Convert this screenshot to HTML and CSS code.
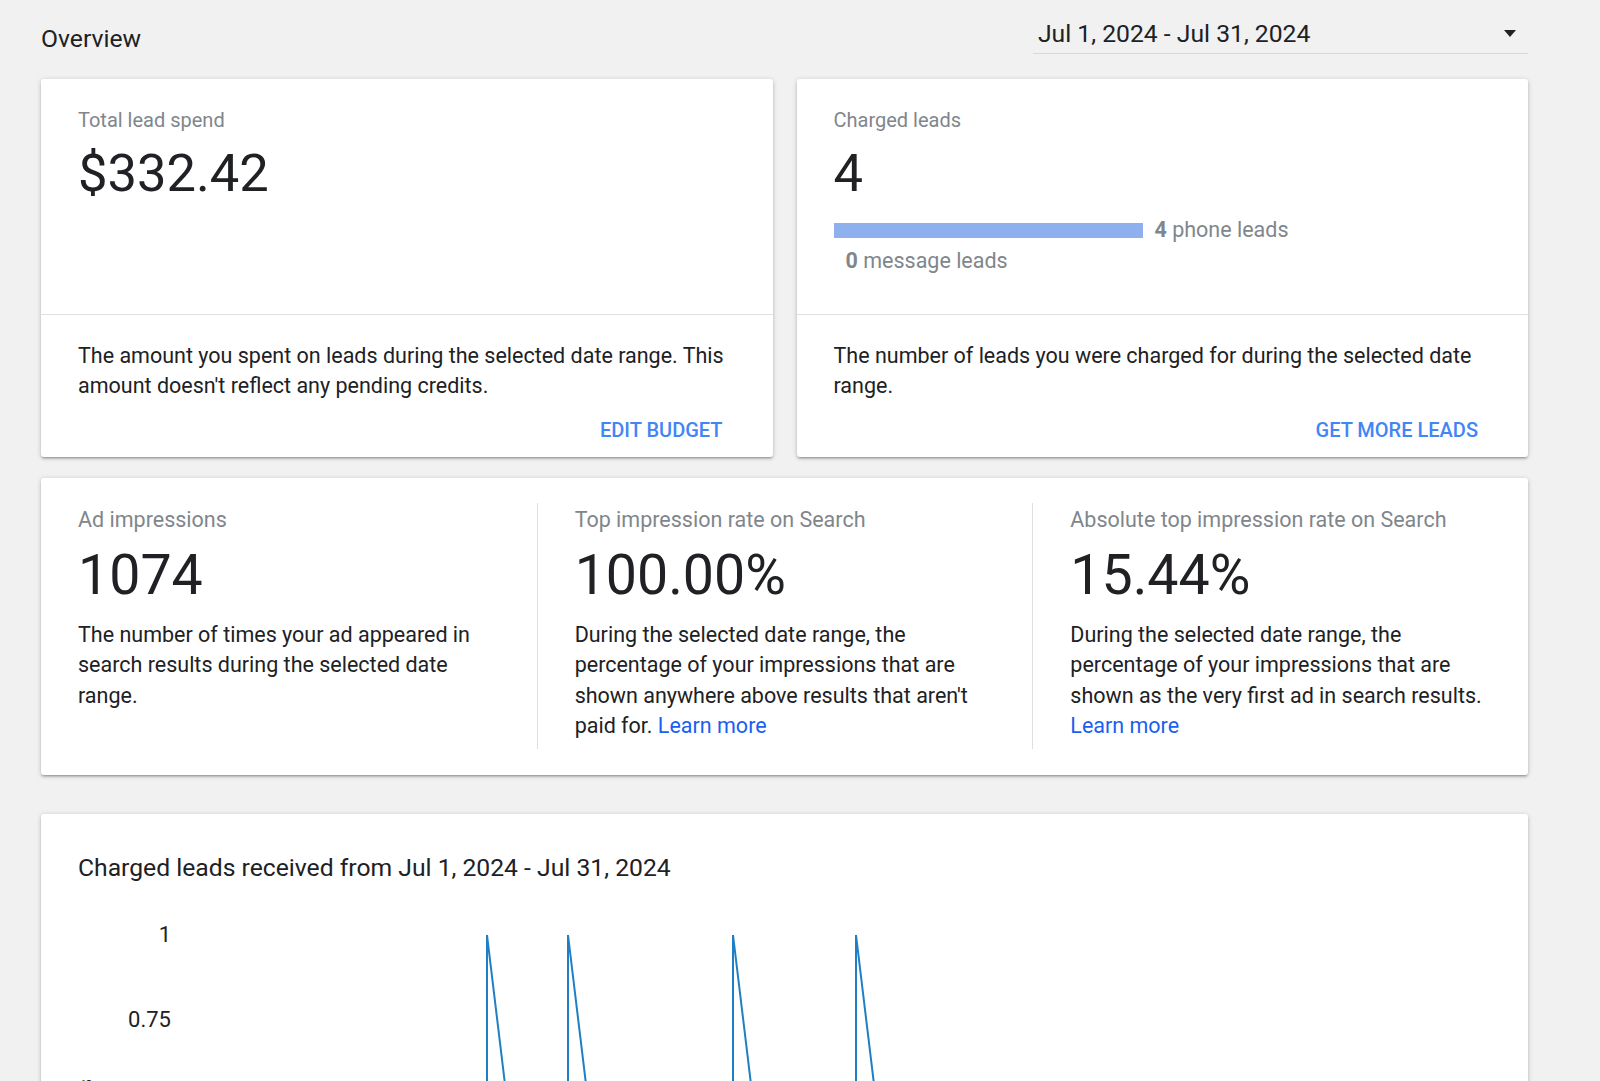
FILE: index.html
```html
<!DOCTYPE html>
<html lang="en">
<head>
<meta charset="utf-8">
<title>Overview</title>
<link rel="stylesheet" href="styles.css">
</head>
<body>
<div class="page">
  <header class="header">
    <h1 class="page-title">Overview</h1>
    <div class="date-select">
      <span class="date-text">Jul 1, 2024 - Jul 31, 2024</span>
      <svg class="caret" width="12" height="7" viewBox="0 0 12 7"><path d="M0 0 L12 0 L6 7 Z" fill="#202124"/></svg>
    </div>
  </header>

  <section class="summary">
    <div class="card">
      <div class="card-top">
        <div class="label">Total lead spend</div>
        <div class="value">$332.42</div>
      </div>
      <div class="card-bottom">
        <p class="desc">The amount you spent on leads during the selected date range. This amount doesn't reflect any pending credits.</p>
        <div class="actions"><a class="btn" href="#">EDIT BUDGET</a></div>
      </div>
    </div>
    <div class="card">
      <div class="card-top">
        <div class="label">Charged leads</div>
        <div class="value">4</div>
        <div class="lead-bars">
          <div class="bar-row"><span class="bar" style="width:309px"></span><span><b>4</b> phone leads</span></div>
          <div class="bar-row"><span class="bar" style="width:0px"></span><span><b>0</b> message leads</span></div>
        </div>
      </div>
      <div class="card-bottom">
        <p class="desc">The number of leads you were charged for during the selected date range.</p>
        <div class="actions"><a class="btn" href="#">GET MORE LEADS</a></div>
      </div>
    </div>
  </section>

  <section class="card metrics">
    <div class="metric">
      <div class="metric-label">Ad impressions</div>
      <div class="metric-value">1074</div>
      <p class="desc">The number of times your ad appeared in search results during the selected date range.</p>
    </div>
    <div class="metric">
      <div class="metric-label">Top impression rate on Search</div>
      <div class="metric-value">100.00%</div>
      <p class="desc">During the selected date range, the percentage of your impressions that are shown anywhere above results that aren't paid for. <a class="link" href="#">Learn more</a></p>
    </div>
    <div class="metric">
      <div class="metric-label">Absolute top impression rate on Search</div>
      <div class="metric-value">15.44%</div>
      <p class="desc">During the selected date range, the percentage of your impressions that are shown as the very first ad in search results. <a class="link" href="#">Learn more</a></p>
    </div>
  </section>

  <section class="card chart-card">
    <h2 class="chart-title">Charged leads received from Jul 1, 2024 - Jul 31, 2024</h2>
    <svg class="chart" width="1487" height="420" viewBox="0 0 1487 420">
      <text class="axis" x="130" y="60" text-anchor="end">1</text>
      <text class="axis" x="130" y="145" text-anchor="end">0.75</text>
      <text class="axis" x="130" y="230" text-anchor="end">0.5</text>
      <text class="axis" x="130" y="315" text-anchor="end">0.25</text>
      <text class="axis" x="130" y="400" text-anchor="end">0</text>
      <text class="axis-title" transform="translate(51 197) rotate(-90)" text-anchor="end">Charged leads</text>
      <polyline class="line" points="160,393 446,393 446,53 487,393 527,393 527,53 568,393 692,393 692,53 733,393 815,393 815,53 856,393 1430,393"/>
    </svg>
  </section>
</div>
</body>
</html>
```

FILE: styles.css
```css
* { box-sizing: border-box; }

html, body {
  margin: 0;
  padding: 0;
  background: #f1f1f1;
  font-family: Roboto, "Noto Sans", Arial, sans-serif;
  color: #202124;
}

.page {
  width: 1600px;
  padding: 0 72px 0 41px;
}

.header {
  display: flex;
  justify-content: space-between;
  align-items: flex-start;
  height: 79px;
}

.page-title {
  margin: 25px 0 0;
  font-size: 24.7px;
  line-height: 28px;
  font-weight: 400;
}

.date-select {
  margin-top: 20px;
  width: 495px;
  display: flex;
  justify-content: space-between;
  align-items: center;
  padding: 0 12px 5px 5px;
  border-bottom: 1px solid #d9d9d9;
  font-size: 24.7px;
  line-height: 28px;
}

.caret { display: block; margin-top: -2px; }

.summary {
  display: grid;
  grid-template-columns: 1fr 1fr;
  gap: 24px;
  margin-bottom: 21px;
}

.card {
  background: #fff;
  border-radius: 3px;
  box-shadow: 0 2px 2px 0 rgba(0,0,0,.14), 0 3px 1px -2px rgba(0,0,0,.12), 0 1px 5px 0 rgba(0,0,0,.2);
}

.card-top {
  height: 235px;
  padding: 29px 37px 0;
}

.label {
  font-size: 20px;
  line-height: 24px;
  color: #80868b;
}

.value {
  margin-top: 10px;
  font-size: 52.5px;
  line-height: 62px;
  color: #202124;
}

.lead-bars { margin-top: 14px; }

.bar-row {
  display: flex;
  align-items: center;
  gap: 12px;
  font-size: 21.5px;
  line-height: 24px;
  color: #80868b;
}

.bar-row + .bar-row { margin-top: 7px; }

.bar-row b { font-weight: 700; }

.bar {
  display: block;
  height: 15px;
  background: #8fb0ef;
}

.card-bottom {
  border-top: 1px solid #e0e0e0;
  padding: 25.5px 30px 15.5px 37px;
}

.desc {
  margin: 0;
  font-size: 21.5px;
  line-height: 30.5px;
  color: #202124;
}

.actions {
  margin-top: 16px;
  display: flex;
  justify-content: flex-end;
}

.btn {
  margin-right: 20px;
  font-size: 20px;
  line-height: 24px;
  font-weight: 500;
  color: #4285f4;
  text-decoration: none;
}

.metrics {
  display: grid;
  grid-template-columns: repeat(3, 1fr);
  padding: 25px 0 26px;
  margin-bottom: 39px;
}

.metric {
  padding: 5px 33px 7.5px 37px;
}

.metric + .metric { border-left: 1px solid #e0e0e0; }

.metric-label {
  font-size: 21.5px;
  line-height: 24px;
  color: #80868b;
}

.metric-value {
  margin-top: 12.4px;
  font-size: 55.5px;
  line-height: 64px;
  color: #202124;
}

.metric .desc { margin-top: 11.3px; }

.link {
  color: #1a5ff0;
  text-decoration: none;
}

.chart-card {
  padding-top: 39.6px;
}

.chart-title {
  margin: 0 37px;
  font-size: 24.7px;
  line-height: 28px;
  font-weight: 400;
}

.chart { display: block; }

.axis {
  font-family: Roboto, "Noto Sans", Arial, sans-serif;
  font-size: 22px;
  fill: #202124;
}

.axis-title {
  font-family: Roboto, "Noto Sans", Arial, sans-serif;
  font-size: 20px;
  fill: #202124;
}

.line {
  fill: none;
  stroke: #1f7fc4;
  stroke-width: 2;
  stroke-linejoin: miter;
}
```
